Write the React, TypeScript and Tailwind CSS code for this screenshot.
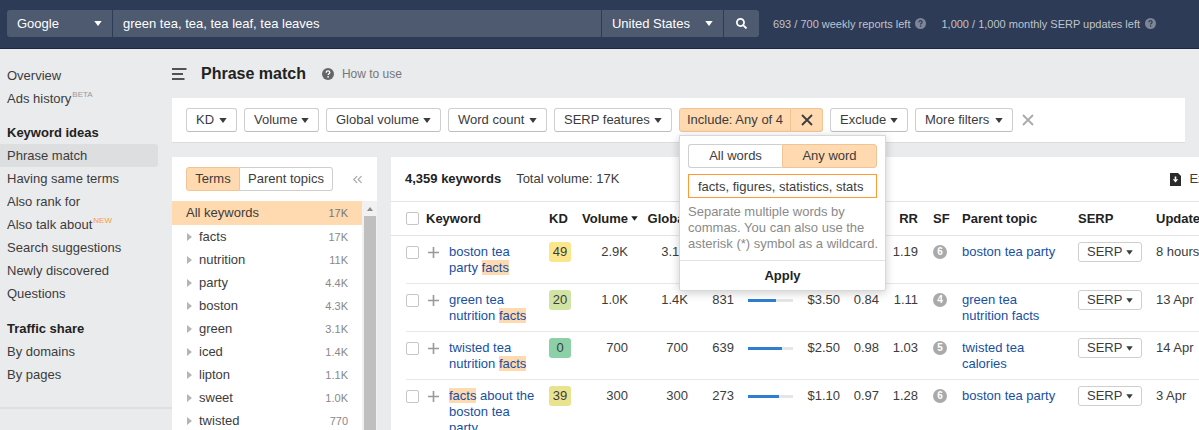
import { useState } from 'react';
import { FaSearch } from 'react-icons/fa';
import { ChevronsLeft } from 'lucide-react';
import clsx from 'clsx';

const ideaLinks = [
  { label: 'Phrase match', active: true },
  { label: 'Having same terms' },
  { label: 'Also rank for' },
  { label: 'Also talk about', badge: 'NEW' },
  { label: 'Search suggestions' },
  { label: 'Newly discovered' },
  { label: 'Questions' },
];

const terms = [
  ['facts', '17K'],
  ['nutrition', '11K'],
  ['party', '4.4K'],
  ['boston', '4.3K'],
  ['green', '3.1K'],
  ['iced', '1.4K'],
  ['lipton', '1.1K'],
  ['sweet', '1.0K'],
  ['twisted', '770'],
];

const rows = [
  { before: 'boston tea party ', after: '', kd: 49, kdColor: 'bg-[#fbe68c]', volume: '2.9K', global: '3.1K', clicks: '', bar: 0, cpc: '', cps: '', rr: '1.19', sf: 6, parent: 'boston tea party', updated: '8 hours ago' },
  { before: 'green tea nutrition ', after: '', kd: 20, kdColor: 'bg-[#d2e4a4]', volume: '1.0K', global: '1.4K', clicks: '831', bar: 62, cpc: '$3.50', cps: '0.84', rr: '1.11', sf: 4, parent: 'green tea nutrition facts', updated: '13 Apr' },
  { before: 'twisted tea nutrition ', after: '', kd: 0, kdColor: 'bg-[#8bd0a6]', volume: '700', global: '700', clicks: '639', bar: 76, cpc: '$2.50', cps: '0.98', rr: '1.03', sf: 5, parent: 'twisted tea calories', updated: '14 Apr' },
  { before: '', after: ' about the boston tea party', kd: 39, kdColor: 'bg-[#e9e390]', volume: '300', global: '300', clicks: '273', bar: 69, cpc: '$1.10', cps: '0.97', rr: '1.28', sf: 6, parent: 'boston tea party', updated: '3 Apr' },
];

const Caret = ({ className = '' }: { className?: string }) => (
  <svg viewBox="0 0 8 5" className={clsx('w-2 h-[5px] shrink-0 fill-current', className)} aria-hidden="true">
    <path d="M0.3 0h7.4L4 5z" />
  </svg>
);

const Cross = ({ className = '' }: { className?: string }) => (
  <svg viewBox="0 0 12 12" className={clsx('w-3 h-3 stroke-current', className)} strokeWidth="1.8" aria-hidden="true">
    <path d="M1 1l10 10M11 1L1 11" />
  </svg>
);

const Help = ({ className = '' }: { className?: string }) => (
  <svg viewBox="0 0 12 12" className={clsx('shrink-0', className)} aria-hidden="true">
    <circle cx="6" cy="6" r="6" fill="currentColor" />
    <path d="M4.2 4.7C4.2 3.5 5 2.9 6 2.9s1.8.6 1.8 1.6C7.8 5.7 6.1 5.7 6.1 7" fill="none" className="stroke-(--mark)" strokeWidth="1.3" />
    <circle cx="6.1" cy="8.8" r="0.85" className="fill-(--mark)" />
  </svg>
);

const FilterButton = ({ label, className }: { label: string; className: string }) => (
  <button
    className={clsx(
      'h-6 flex items-center justify-between px-[9px] bg-white border border-[#cfcfcf] border-b-[#bdbdbd] rounded-[3px] whitespace-nowrap',
      className
    )}
  >
    {label}
    <Caret />
  </button>
);

const Header = () => (
  <header className="h-[49px] shrink-0 flex items-start pt-[10px] pl-[7px] pr-[43px] bg-[#2e3b56] border-b border-[#1a2645] text-white">
    <form className="flex-1 flex gap-px h-[27px] mr-[14px]" onSubmit={(e) => e.preventDefault()}>
      <div className="w-[105px] relative flex items-center bg-[#4e5a70] rounded-l-[3px]">
        <select aria-label="Search engine" className="w-full h-full pl-[10px] appearance-none bg-transparent outline-none">
          <option>Google</option>
        </select>
        <Caret className="absolute right-[10px] pointer-events-none" />
      </div>
      <input
        aria-label="Keywords"
        defaultValue="green tea, tea, tea leaf, tea leaves"
        className="flex-1 min-w-0 px-[10px] bg-[#4e5a70] outline-none"
      />
      <div className="w-[121px] relative flex items-center bg-[#4e5a70]">
        <select aria-label="Country" className="w-full h-full pl-[10px] appearance-none bg-transparent outline-none">
          <option>United States</option>
        </select>
        <Caret className="absolute right-[10px] pointer-events-none" />
      </div>
      <button aria-label="Search" className="w-[35px] flex items-center justify-center bg-[#4e5a70] rounded-r-[3px]">
        <FaSearch className="w-[11px] h-[11px]" />
      </button>
    </form>
    <div className="h-[27px] flex items-center gap-[15px] text-[11px] text-[#bfc4cd] whitespace-nowrap">
      <span className="flex items-center gap-[5px]">
        693 / 700 weekly reports left
        <Help className="w-[11px] h-[11px] text-[#7d8697] [--mark:#2e3b56]" />
      </span>
      <span className="flex items-center gap-[5px]">
        1,000 / 1,000 monthly SERP updates left
        <Help className="w-[11px] h-[11px] text-[#7d8697] [--mark:#2e3b56]" />
      </span>
    </div>
  </header>
);

const SideLink = ({ label, badge, active }: { label: string; badge?: string; active?: boolean }) => (
  <a
    href="#"
    className={clsx('h-[23px] flex items-center pl-[7px] mr-[14px] rounded-r-[3px] whitespace-nowrap', active && 'bg-[#dddee0]')}
  >
    {label}
    {badge && (
      <span className={clsx('ml-px pb-2 text-[8px]', badge === 'NEW' ? 'text-[#ff9a2e]' : 'text-[#999]')}>{badge}</span>
    )}
  </a>
);

const Sidebar = () => (
  <nav className="w-[172px] shrink-0 pt-[15px]">
    <SideLink label="Overview" />
    <SideLink label="Ads history" badge="BETA" />
    <h3 className="h-[23px] mt-[11px] pl-[7px] flex items-center font-bold text-[#222]">Keyword ideas</h3>
    {ideaLinks.map((link) => (
      <SideLink key={link.label} {...link} />
    ))}
    <h3 className="h-[23px] mt-3 pl-[7px] flex items-center font-bold text-[#222]">Traffic share</h3>
    <SideLink label="By domains" />
    <SideLink label="By pages" />
    <hr className="mt-[21px] border-t-2 border-[#dedfe1]" />
  </nav>
);

const IncludePopup = () => {
  const [words, setWords] = useState('facts, figures, statistics, stats');
  return (
    <div className="absolute left-0 top-[27px] z-10 w-[207px] bg-white rounded-b-[2px] border border-[#d8d8d8] shadow-[0_2px_10px_rgba(0,0,0,0.2)]">
      <div className="p-2">
        <div className="flex h-6">
          <button className="flex-1 border border-r-0 border-[#cfcfcf] rounded-l-[3px]">All words</button>
          <button className="flex-1 bg-[#ffd9b0] border border-[#efc597] rounded-r-[3px]">Any word</button>
        </div>
        <input
          aria-label="Words to include"
          value={words}
          onChange={(e) => setWords(e.target.value)}
          className="w-full h-6 mt-[6px] px-[9px] bg-white border border-[#ff9933] outline-none"
        />
        <p className="mt-[6px] leading-4 text-[#8a8a8a] whitespace-nowrap">
          Separate multiple words by
          <br />
          commas. You can also use the
          <br />
          asterisk (*) symbol as a wildcard.
        </p>
      </div>
      <button className="w-full h-[30px] border-t border-[#e3e3e3] font-bold text-[#222]">Apply</button>
    </div>
  );
};

const Filters = () => (
  <div className="mr-[14px] h-[45px] flex gap-[7px] pt-[10px] pl-[14px] bg-white border-b border-[#dcdcdc]">
    <FilterButton label="KD" className="w-[51px]" />
    <FilterButton label="Volume" className="w-[75px]" />
    <FilterButton label="Global volume" className="w-[115px]" />
    <FilterButton label="Word count" className="w-[99px]" />
    <FilterButton label="SERP features" className="w-[118px]" />
    <div className="relative w-[144px] h-6 flex">
      <button className="flex-1 bg-[#ffd9b0] border border-[#efc597] rounded-l-[3px] whitespace-nowrap">Include: Any of 4</button>
      <button
        aria-label="Clear include filter"
        className="w-8 flex items-center justify-center bg-[#ffd9b0] border border-l-0 border-[#efc597] rounded-r-[3px]"
      >
        <Cross />
      </button>
      <IncludePopup />
    </div>
    <FilterButton label="Exclude" className="w-[78px]" />
    <FilterButton label="More filters" className="w-[98px]" />
    <button aria-label="Clear all filters" className="h-6 pl-[2px] text-[#aaa]">
      <Cross />
    </button>
  </div>
);

const TermsPanel = () => (
  <section className="w-[205px] shrink-0 flex flex-col bg-white overflow-hidden">
    <div className="h-11 shrink-0 flex items-center justify-between pl-[14px] pr-3">
      <div className="flex h-6">
        <button className="w-[54px] bg-[#ffd9b0] border border-[#efc597] rounded-l-[3px]">Terms</button>
        <button className="w-[93px] border border-l-0 border-[#cfcfcf] rounded-r-[3px] whitespace-nowrap">Parent topics</button>
      </div>
      <button aria-label="Collapse" className="text-[#aaa]">
        <ChevronsLeft className="w-[15px] h-[15px]" />
      </button>
    </div>
    <div className="flex-1 flex min-h-0">
      <ul className="flex-1">
        <li className="h-6 flex items-center justify-between pl-[14px] pr-[14px] bg-[#ffd9b0]">
          All keywords
          <span className="text-[11px] text-[#777]">17K</span>
        </li>
        {terms.map(([name, count]) => (
          <li key={name} className="h-[23px] flex items-center pl-[15px] pr-[14px]">
            <svg viewBox="0 0 5 8" className="w-[5px] h-2 mr-[7px] fill-[#b5b5b5]" aria-hidden="true">
              <path d="M0 0l5 4-5 4z" />
            </svg>
            <span className="flex-1">{name}</span>
            <span className="text-[11px] text-[#888]">{count}</span>
          </li>
        ))}
      </ul>
      <div className="w-[15px] flex flex-col bg-[#f1f1f1] pl-[2px] pr-px">
        <svg viewBox="0 0 12 15" className="w-3 h-[15px] shrink-0 fill-[#8a8a8a]" aria-hidden="true">
          <path d="M6 6l3 4H3z" />
        </svg>
        <div className="flex-1 bg-[#bfbfbf]" />
      </div>
    </div>
  </section>
);

const Checkbox = ({ label }: { label: string }) => (
  <input type="checkbox" aria-label={label} className="block w-[13px] h-[13px] appearance-none bg-white border border-[#c6c6c6] rounded-[2px]" />
);

const KeywordTable = () => (
  <section className="flex-1 min-w-0 bg-white overflow-hidden">
    <div className="w-[855px]">
      <div className="h-11 flex items-center pl-[14px]">
        <strong className="text-[#222]">4,359 keywords</strong>
        <span className="ml-[15px]">Total volume: 17K</span>
        <button className="ml-auto mr-[19px] flex items-center gap-2">
          <svg viewBox="0 0 11 13" className="w-[11px] h-[13px]" aria-hidden="true">
            <path d="M0 0h8l3 3v10H0z" fill="#2b2b2b" />
            <path d="M5.5 3.5v3" fill="none" stroke="#fff" strokeWidth="1.6" />
            <path d="M2.8 6.3h5.4L5.5 9.4z" fill="#fff" />
          </svg>
          Export
        </button>
      </div>
      <table className="w-full table-fixed leading-4">
        <colgroup>
          <col className="w-[15px]" />
          <col className="w-[20px]" />
          <col className="w-[23px]" />
          <col className="w-[100px]" />
          <col className="w-[22px]" />
          <col className="w-[67px]" />
          <col className="w-[50px]" />
          <col className="w-[46px]" />
          <col className="w-[60px]" />
          <col className="w-[46px]" />
          <col className="w-[39px]" />
          <col className="w-[39px]" />
          <col className="w-[29px]" />
          <col className="w-[131px]" />
          <col className="w-[78px]" />
          <col />
        </colgroup>
        <thead>
          <tr className="h-[34px] border-y border-[#e4e4e4] text-left text-[#222] whitespace-nowrap">
            <th></th>
            <th><Checkbox label="Select all" /></th>
            <th colSpan={2}>Keyword</th>
            <th>KD</th>
            <th>
              <span className="flex items-center justify-end gap-[3px]">
                Volume
                <Caret className="w-[7px]" />
              </span>
            </th>
            <th className="text-right">Global</th>
            <th className="text-right">Clicks</th>
            <th></th>
            <th className="text-right">CPC</th>
            <th className="text-right">CPS</th>
            <th className="text-right">RR</th>
            <th className="pl-[15px]">SF</th>
            <th className="pl-[15px]">Parent topic</th>
            <th>SERP</th>
            <th>Updated</th>
          </tr>
        </thead>
        <tbody>
          {rows.map((row) => (
            <tr key={row.kd} className="align-top [&>td]:pt-2 [&>td]:pb-[7px] [&>td+td]:border-b [&>td+td]:border-[#e8e8e8]">
              <td></td>
              <td><span className="flex h-4 items-center"><Checkbox label={`Select keyword with KD ${row.kd}`} /></span></td>
              <td>
                <button aria-label="Add to list" className="flex h-4 items-center pl-[2px]">
                  <svg viewBox="0 0 11 11" className="w-[11px] h-[11px] stroke-[#999]" strokeWidth="1.6" aria-hidden="true">
                    <path d="M5.5 0v11M0 5.5h11" />
                  </svg>
                </button>
              </td>
              <td className="pr-3">
                <a href="#" className="text-[#1650a0]">
                  {row.before}
                  <mark className="bg-[#ffd9b0] text-inherit">facts</mark>
                  {row.after}
                </a>
              </td>
              <td>
                <span className={clsx('block -my-[2px] w-[22px] h-5 leading-5 rounded-[3px] text-center', row.kdColor)}>{row.kd}</span>
              </td>
              <td className="text-right pr-[10px]">{row.volume}</td>
              <td className="text-right">{row.global}</td>
              <td className="text-right">{row.clicks}</td>
              <td className="pl-[14px]">
                <div className="mt-[7px] w-[45px] h-[3px] bg-[#e6e6e6]">
                  <div className="h-full bg-[#2f7fd0]" style={{ width: `${row.bar}%` }} />
                </div>
              </td>
              <td className="text-right">{row.cpc}</td>
              <td className="text-right">{row.cps}</td>
              <td className="text-right">{row.rr}</td>
              <td className="pl-[15px]">
                <span className="block mt-px w-[14px] h-[14px] rounded-full bg-[#aaa] text-white text-[10px] leading-[14px] font-bold text-center">
                  {row.sf}
                </span>
              </td>
              <td className="px-[15px]"><a href="#" className="text-[#1650a0]">{row.parent}</a></td>
              <td>
                <button className="-my-[2px] w-16 h-5 flex items-center justify-between px-2 border border-[#cfcfcf] rounded-[3px]">
                  SERP
                  <Caret className="w-[7px]" />
                </button>
              </td>
              <td className="whitespace-nowrap">{row.updated}</td>
            </tr>
          ))}
        </tbody>
      </table>
    </div>
  </section>
);

const App = () => (
  <div className="h-screen flex flex-col overflow-hidden bg-[#eaebed] font-['Liberation_Sans',Arial,sans-serif] text-[13px] leading-4 text-[#3c3c3c]">
    <Header />
    <div className="flex-1 min-h-0 flex">
      <Sidebar />
      <main className="flex-1 min-w-0 flex flex-col">
        <div className="h-[49px] shrink-0 flex items-center">
          <button aria-label="Toggle menu">
            <svg viewBox="0 0 15 12" className="w-[15px] h-3 stroke-[#222]" strokeWidth="1.6" aria-hidden="true">
              <path d="M0 1h14.5M0 6h11M0 11h12.5" />
            </svg>
          </button>
          <h1 className="ml-[14px] text-base font-bold text-[#222]">Phrase match</h1>
          <a href="#" className="ml-4 flex items-center gap-2 text-xs text-[#777]">
            <Help className="w-3 h-3 text-[#666] [--mark:#fff]" />
            How to use
          </a>
        </div>
        <Filters />
        <div className="flex-1 min-h-0 mt-[14px] flex gap-[14px]">
          <TermsPanel />
          <KeywordTable />
        </div>
      </main>
    </div>
  </div>
);

export default App;
